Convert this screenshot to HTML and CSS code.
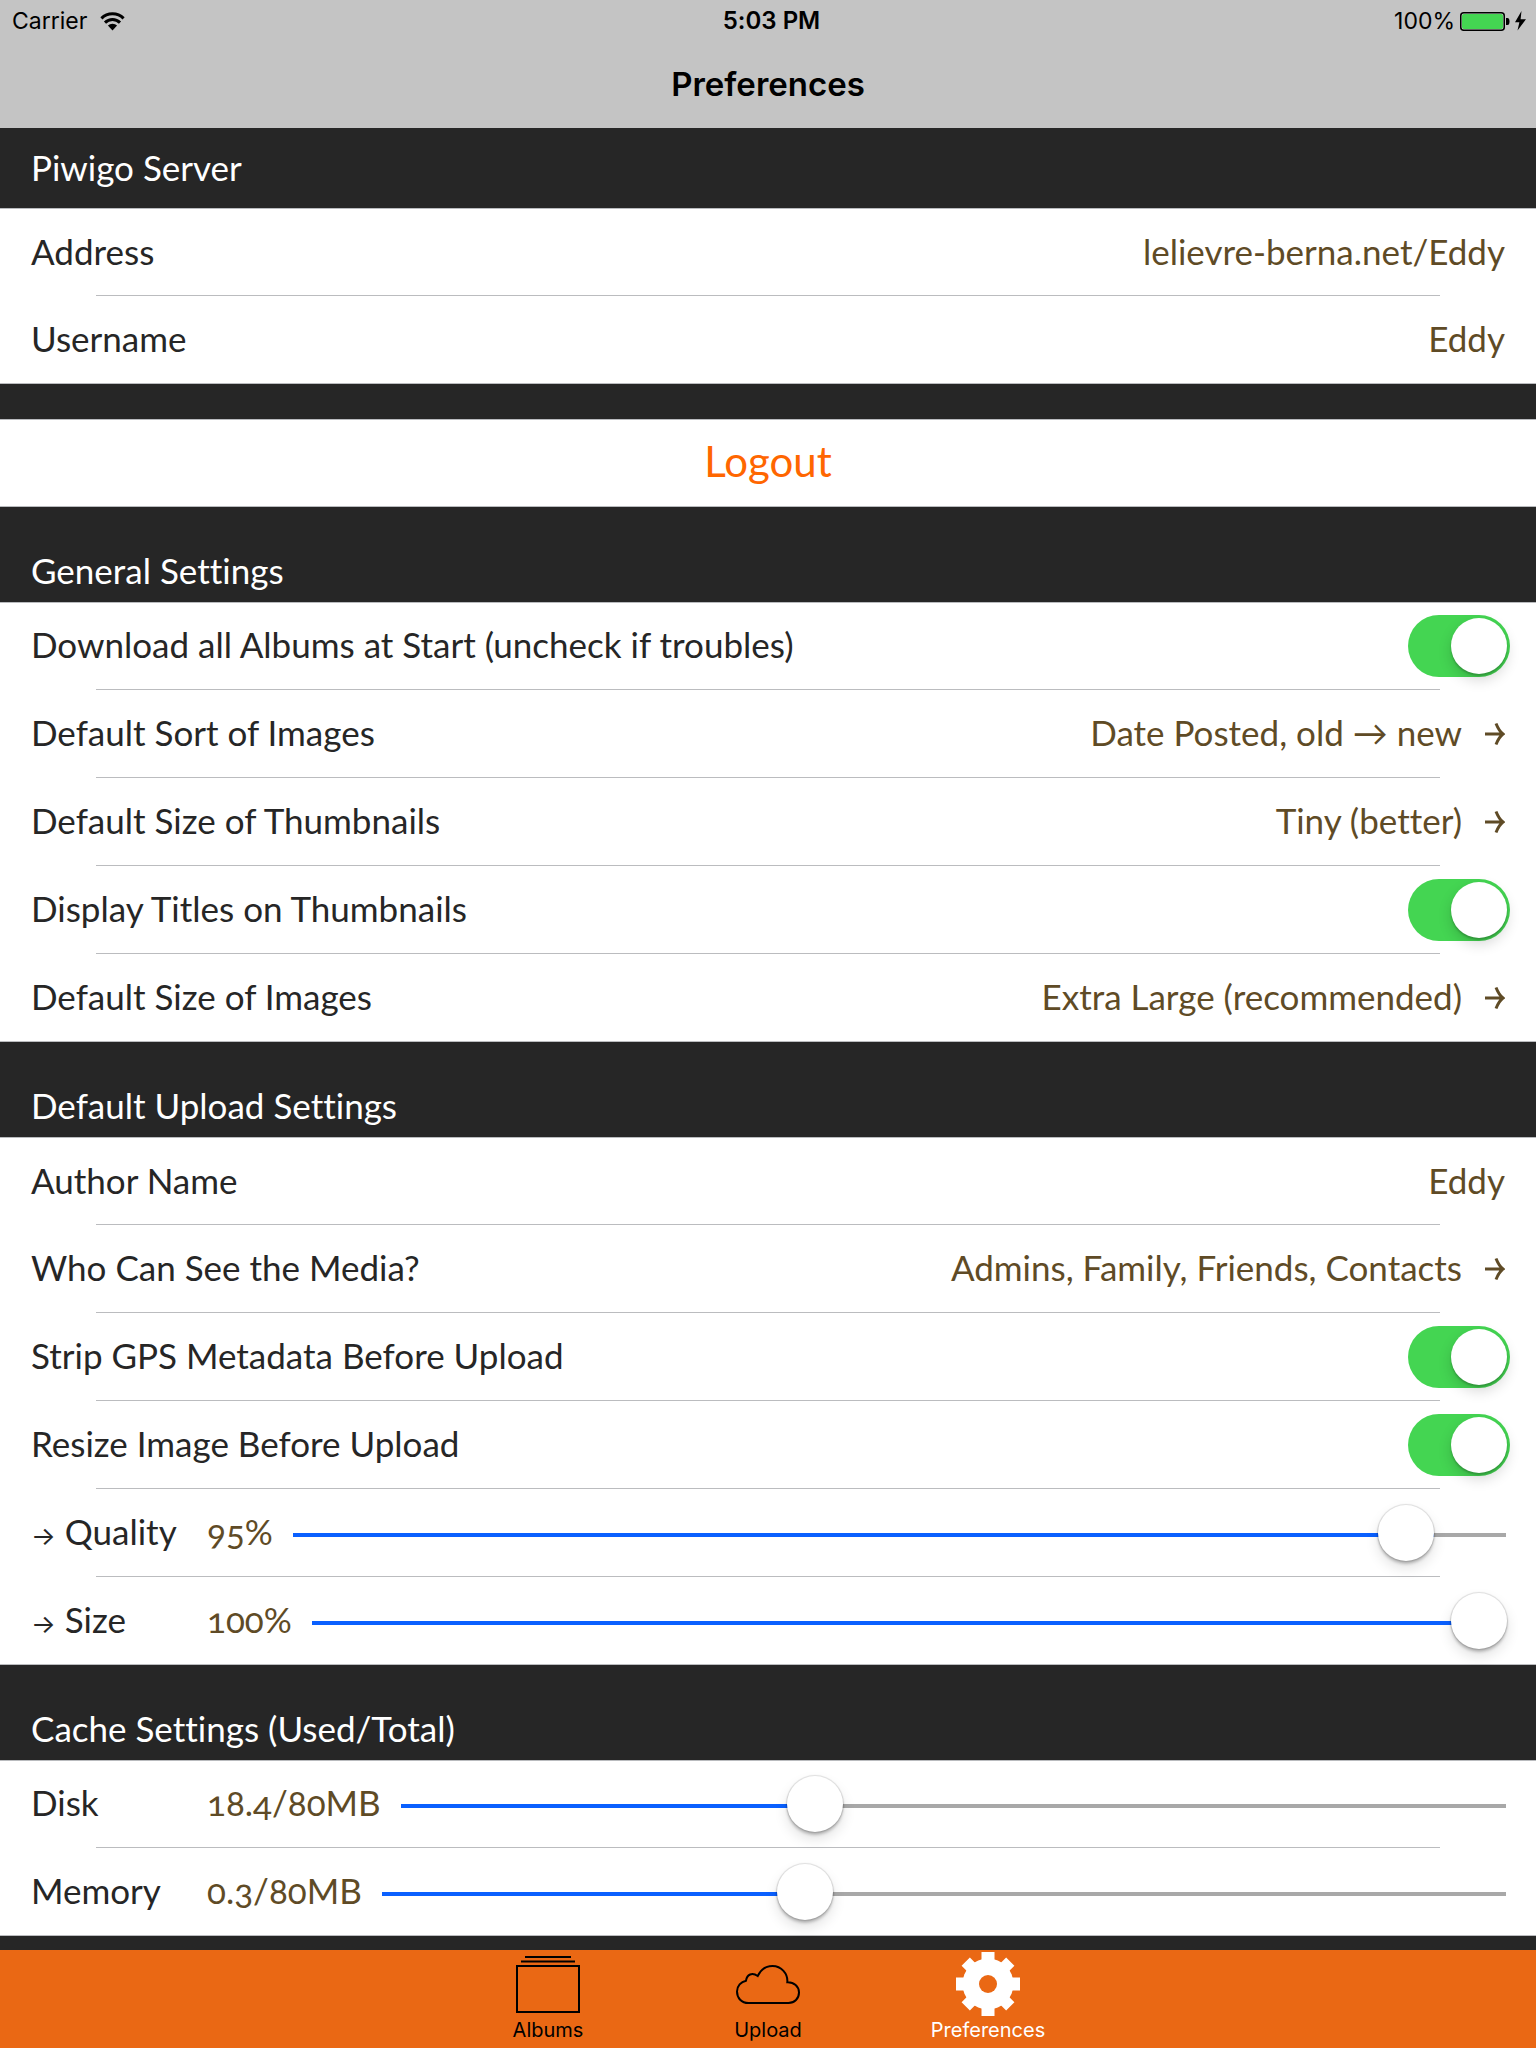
FILE: index.html
```html
<!DOCTYPE html>
<html lang="en">
<head>
<meta charset="utf-8">
<meta name="viewport" content="width=device-width, initial-scale=1">
<title>Preferences</title>
<link rel="stylesheet" href="styles.css">
</head>
<body>
<div class="app">
  <header class="topbar">
    <div class="status">
      <div class="status-left">
        <span>Carrier</span>
        <svg width="25" height="19" viewBox="0 0 25 19" aria-hidden="true">
          <g fill="none" stroke="#000" stroke-width="3"><path d="M1.400 6.400A15.700 15.700 0 0 1 23.600 6.400"/><path d="M5 10.600A10.600 10.600 0 0 1 20 10.600"/></g>
          <path d="M7.900 13.600A6.500 6.500 0 0 1 17.100 13.600L12.500 18.500Z"/>
        </svg>
      </div>
      <time class="clock">5:03 PM</time>
      <div class="status-right">
        <span>100%</span>
        <svg width="67" height="20" viewBox="0 0 67 20" aria-hidden="true">
          <rect x="0.750" y="1.750" width="43.500" height="17.500" rx="3" fill="none" stroke="#000" stroke-width="1.500"/>
          <rect x="2" y="3" width="41" height="15" rx="2" fill="#44d552"/>
          <path d="M46 7h1.500a2 3.500 0 0 1 0 7H46Z"/>
          <path d="M61.500 0L55 11.200H59.400L57.500 19.500L66 8.200H60.600Z"/>
        </svg>
      </div>
    </div>
    <h1 class="title">Preferences</h1>
  </header>

  <main class="settings">
    <section>
      <h2 class="heading heading-first">Piwigo Server</h2>
      <ul class="group">
        <li class="row"><span>Address</span><span class="value">lelievre-berna.net/Eddy</span></li>
        <li class="row"><span>Username</span><span class="value">Eddy</span></li>
      </ul>
    </section>

    <section class="logout">
      <button class="logout-button" type="button">Logout</button>
    </section>

    <section>
      <h2 class="heading">General Settings</h2>
      <ul class="group">
        <li class="row row-switch"><label for="download">Download all Albums at Start (uncheck if troubles)</label><input class="switch" id="download" type="checkbox" checked></li>
        <li class="row"><span>Default Sort of Images</span><a class="value" href="#sort">Date Posted, old → new <svg class="arrow" viewBox="0 0 20 28" aria-hidden="true"><path d="M0 16H18M11 5.500Q14 13 18 16Q14 19 11 26.500"/></svg></a></li>
        <li class="row"><span>Default Size of Thumbnails</span><a class="value" href="#thumbnails">Tiny (better) <svg class="arrow" viewBox="0 0 20 28" aria-hidden="true"><path d="M0 16H18M11 5.500Q14 13 18 16Q14 19 11 26.500"/></svg></a></li>
        <li class="row row-switch"><label for="titles">Display Titles on Thumbnails</label><input class="switch" id="titles" type="checkbox" checked></li>
        <li class="row"><span>Default Size of Images</span><a class="value" href="#images">Extra Large (recommended) <svg class="arrow" viewBox="0 0 20 28" aria-hidden="true"><path d="M0 16H18M11 5.500Q14 13 18 16Q14 19 11 26.500"/></svg></a></li>
      </ul>
    </section>

    <section>
      <h2 class="heading">Default Upload Settings</h2>
      <ul class="group">
        <li class="row"><label for="author">Author Name</label><input class="value author" id="author" type="text" value="Eddy"></li>
        <li class="row"><span>Who Can See the Media?</span><a class="value" href="#privacy">Admins, Family, Friends, Contacts <svg class="arrow" viewBox="0 0 20 28" aria-hidden="true"><path d="M0 16H18M11 5.500Q14 13 18 16Q14 19 11 26.500"/></svg></a></li>
        <li class="row row-switch"><label for="gps">Strip GPS Metadata Before Upload</label><input class="switch" id="gps" type="checkbox" checked></li>
        <li class="row row-switch"><label for="resize">Resize Image Before Upload</label><input class="switch" id="resize" type="checkbox" checked></li>
        <li class="row row-slider"><label class="slider-label" for="quality"><span class="lead">→</span> Quality</label><output class="amount" for="quality">95%</output><input class="slider" id="quality" type="range" min="0" max="1000" value="937" style="--fill:94%"></li>
        <li class="row row-slider"><label class="slider-label" for="size"><span class="lead">→</span> Size</label><output class="amount" for="size">100%</output><input class="slider" id="size" type="range" min="0" max="1000" value="1000" style="--fill:98%"></li>
      </ul>
    </section>

    <section>
      <h2 class="heading">Cache Settings (Used/Total)</h2>
      <ul class="group">
        <li class="row row-slider"><label class="slider-label" for="disk">Disk</label><output class="amount" for="disk">18.4/80MB</output><input class="slider" id="disk" type="range" min="0" max="1000" value="368" style="--fill:37%"></li>
        <li class="row row-slider"><label class="slider-label" for="memory">Memory</label><output class="amount" for="memory">0.3/80MB</output><input class="slider" id="memory" type="range" min="0" max="1000" value="370" style="--fill:37%"></li>
      </ul>
    </section>
  </main>

  <nav class="tabs">
    <a class="tab" href="#albums">
      <svg width="64" height="64" viewBox="0 0 64 64" aria-hidden="true"><g fill="none" stroke="#000" stroke-width="2"><path d="M9 5H55M5 9.500H59"/><rect x="1" y="14" width="62" height="46"/></g></svg>
      <span>Albums</span>
    </a>
    <a class="tab" href="#upload">
      <svg width="64" height="64" viewBox="0 0 64 64" aria-hidden="true"><path d="M12.500 51C5.500 51 1 46 1 39.500C1 34 5 29.800 10 28.700C11 22.500 16 20 21.700 24C25 17 30 14 36.500 14A15 15 0 0 1 51.300 30.300C58 30 63 34.500 63 40.500C63 46.500 58.500 51 52.500 51Z" fill="none" stroke="#000" stroke-width="2"/></svg>
      <span>Upload</span>
    </a>
    <a class="tab tab-active" href="#preferences" aria-current="page">
      <svg width="64" height="64" viewBox="0 0 64 64" aria-hidden="true">
        <defs><mask id="hub"><rect width="64" height="64" fill="#fff"/><circle cx="32" cy="32" r="9" fill="#000"/></mask></defs>
        <g fill="#fff" mask="url(#hub)"><circle cx="32" cy="32" r="25.500"/><path d="M25.500 0h13v64h-13zM0 25.500v13h64v-13z"/><path d="M25.500 -3h13v70h-13zM-3 25.500v13h70v-13z" transform="rotate(45 32 32) translate(3.200 3.200) scale(.9)"/></g>
      </svg>
      <span>Preferences</span>
    </a>
  </nav>
</div>
</body>
</html>
```
FILE: styles.css
```css
* { box-sizing: border-box; }

body {
  margin: 0;
  background: #262626;
  color: #262626;
  font: 35px/44px Lato, "Open Sans", sans-serif;
  font-variant-ligatures: none;
  font-variant-numeric: oldstyle-nums;
}

.app {
  display: flex;
  flex-direction: column;
  min-height: 100vh;
}

/* Status and title bar */
.topbar {
  height: 128px;
  background: #c4c4c4;
  color: #000;
  font-family: Inter, Roboto, sans-serif;
  font-variant-numeric: normal;
}

.status {
  display: grid;
  grid-template-columns: 1fr auto 1fr;
  align-items: center;
  height: 42px;
  padding: 0 9px 0 12px;
  font-size: 23px;
  line-height: 42px;
}

.status-left,
.status-right {
  display: flex;
  align-items: center;
}

.status-left { gap: 13px; }
.status-right { gap: 5px; justify-content: flex-end; }
.clock { padding-left: 4px; font-size: 24px; font-weight: 600; }

.title {
  margin: 0;
  padding-top: 18px;
  font-size: 33px;
  font-weight: 600;
  line-height: 48px;
  text-align: center;
}

/* Grouped table */
.heading {
  display: flex;
  align-items: flex-end;
  height: 95px;
  margin: 0;
  padding: 0 31px 10px;
  color: #fff;
  font-size: 35px;
  font-weight: 400;
}

.heading-first {
  height: 80px;
  padding-bottom: 19px;
}

.group {
  margin: 0;
  padding: 0;
  list-style: none;
  border-top: 1px solid #b9bbbe;
  background: #fff;
}

.row {
  display: flex;
  align-items: center;
  justify-content: space-between;
  gap: 24px;
  height: 88px;
  padding: 0 31px 4px;
  background: linear-gradient(#bbbcbf, #bbbcbf) 96px 100% / calc(100% - 192px) 1px no-repeat;
}

.row:first-child { height: 87px; }
.row:last-child { background-position: 0 100%; background-size: 100% 1px; }

.value {
  display: flex;
  align-items: center;
  gap: 23px;
  color: #5f4b26;
  text-decoration: none;
}

.author {
  flex: 1;
  min-width: 0;
  padding: 0;
  border: 0;
  background: none;
  font: inherit;
  text-align: right;
}

.arrow {
  width: 20px;
  height: 28px;
  fill: none;
  stroke: currentColor;
  stroke-width: 3;
}

.logout {
  margin-top: 35px;
  border: solid #b9bbbe;
  border-width: 1px 0;
}

.logout-button {
  display: block;
  width: 100%;
  height: 86px;
  padding: 0 0 4px;
  border: 0;
  background: #fff;
  color: #ff6600;
  font: 42px/48px Lato, "Open Sans", sans-serif;
}

/* Switch */
.row-switch { padding-right: 26px; padding-bottom: 0; }
.row-switch:first-child { padding-bottom: 1px; }
.row-switch label { padding-bottom: 4px; }

.switch {
  display: flex;
  align-items: center;
  justify-content: flex-end;
  width: 102px;
  height: 62px;
  margin: 0;
  padding: 3px;
  border-radius: 31px;
  background: #44d552;
  appearance: none;
}

.switch::before {
  content: "";
  width: 56px;
  height: 56px;
  border-radius: 50%;
  background: #fff;
  box-shadow: 0 2px 2px rgba(0, 0, 0, .2), 0 6px 14px rgba(0, 0, 0, .16);
}

.switch:not(:checked) { justify-content: flex-start; background: #e5e5e5; }

/* Slider */
.row-slider {
  justify-content: flex-start;
  gap: 0;
  padding: 0 29px 0 31px;
}

.row-slider:first-child { padding-bottom: 1px; }
.slider-label { flex: 0 0 176px; padding-bottom: 4px; }
.lead { font: 26px/26px Inter, sans-serif; }
.amount { padding-right: 20px; padding-bottom: 4px; color: #5f4b26; }

.slider {
  flex: 1;
  min-width: 0;
  height: 60px;
  margin: 0;
  background: none;
  appearance: none;
}

.slider::-webkit-slider-runnable-track {
  height: 56px;
  background:
    linear-gradient(#0a60ff, #0a60ff) 0 28px / var(--fill) 4px no-repeat,
    linear-gradient(#a8a8a8, #a8a8a8) 0 28px / calc(100% - 1px) 4px no-repeat;
}

.slider::-webkit-slider-thumb {
  width: 56px;
  height: 56px;
  border-radius: 50%;
  background: #fff;
  box-shadow: 0 0 1px 1px rgba(0, 0, 0, .12), 0 3px 3px rgba(0, 0, 0, .22), 0 7px 14px rgba(0, 0, 0, .12);
  appearance: none;
}

/* Tab bar */
.tabs {
  display: flex;
  justify-content: center;
  gap: 20px;
  height: 98px;
  margin-top: auto;
  background: #ea6814;
  font: 20px/24px Inter, Roboto, sans-serif;
}

.tab {
  display: flex;
  flex-direction: column;
  align-items: center;
  gap: 2px;
  width: 200px;
  padding-top: 2px;
  color: #000;
  text-decoration: none;
}

.tab-active { color: #fff; }
```
